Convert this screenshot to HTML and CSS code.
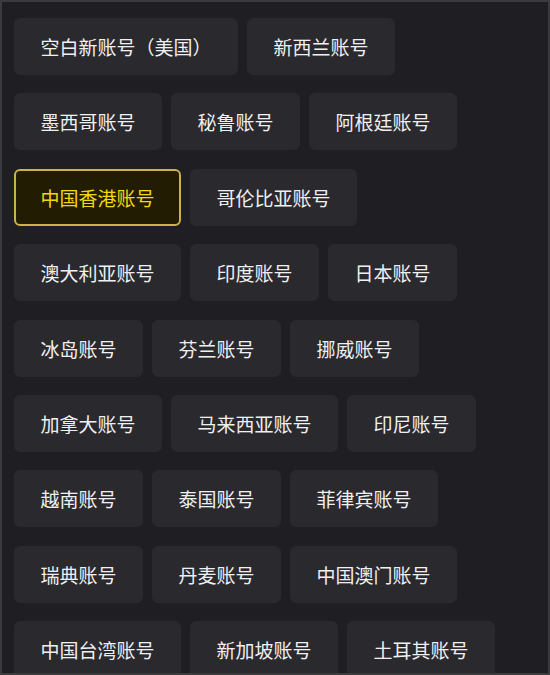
FILE: index.html
```html
<!DOCTYPE html>
<html lang="zh-CN">
<head>
  <meta charset="UTF-8">
  <meta name="viewport" content="width=device-width, initial-scale=1.0">
  <title>账号选择</title>
  <link rel="stylesheet" href="styles.css">
</head>
<body>
  <div class="frame">
    <div class="account-list">
      <button class="account">空白新账号（美国）</button>
      <button class="account">新西兰账号</button>
      <button class="account">墨西哥账号</button>
      <button class="account">秘鲁账号</button>
      <button class="account">阿根廷账号</button>
      <button class="account active">中国香港账号</button>
      <button class="account">哥伦比亚账号</button>
      <button class="account">澳大利亚账号</button>
      <button class="account">印度账号</button>
      <button class="account">日本账号</button>
      <button class="account">冰岛账号</button>
      <button class="account">芬兰账号</button>
      <button class="account">挪威账号</button>
      <button class="account">加拿大账号</button>
      <button class="account">马来西亚账号</button>
      <button class="account">印尼账号</button>
      <button class="account">越南账号</button>
      <button class="account">泰国账号</button>
      <button class="account">菲律宾账号</button>
      <button class="account">瑞典账号</button>
      <button class="account">丹麦账号</button>
      <button class="account">中国澳门账号</button>
      <button class="account">中国台湾账号</button>
      <button class="account">新加坡账号</button>
      <button class="account">土耳其账号</button>
    </div>
  </div>
</body>
</html>
```

FILE: styles.css
```css
body {
  margin: 0;
  padding: 0;
  background: #1f1e23;
  font-family: "Noto Sans CJK SC", "Noto Sans", sans-serif;
}

.frame {
  box-sizing: border-box;
  width: 550px;
  height: 675px;
  border: 2px solid #3b3b3e;
  background: #1f1e23;
  overflow: hidden;
}

.account-list {
  display: flex;
  flex-wrap: wrap;
  align-items: flex-start;
  column-gap: 9px;
  row-gap: 18.4px;
  width: 510px;
  padding: 16px 0 0 12px;
}

.account {
  height: 57px;
  padding: 0 24.5px;
  background: #2a292e;
  color: #f0f0f2;
  border: 2px solid #2a292e;
  border-radius: 6px;
  font-family: inherit;
  font-size: 19px;
  font-weight: 400;
  line-height: 25px;
  cursor: pointer;
}

.account.active {
  background: #221c02;
  border-color: #cbb24a;
  color: #f5d80c;
}
```
